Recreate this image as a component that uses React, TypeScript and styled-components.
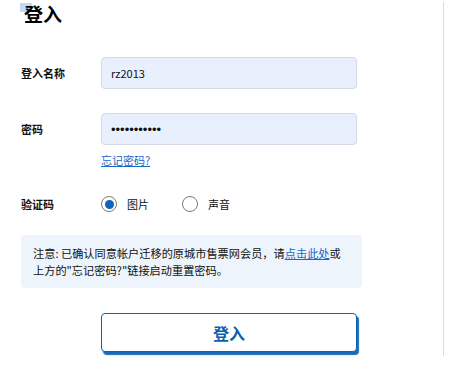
import React, { useState } from 'react';
import styled, { createGlobalStyle } from 'styled-components';

const GlobalStyle = createGlobalStyle`
  html, body {
    margin: 0;
    padding: 0;
    background: #ffffff;
  }
  body {
    font-family: "Noto Sans CJK SC", "Noto Sans", sans-serif;
    color: #111;
  }
`;

const Page = styled.div`
  width: 444px;
  height: 354px;
  margin-top: 2px;
  border-right: 1px solid #dcdcdc;
  box-sizing: border-box;
  padding-left: 21px;
  display: flex;
  flex-direction: column;
`;

const TitleWrap = styled.div`
  position: relative;
  height: 26px;
`;

const Marker = styled.span`
  position: absolute;
  left: -1px;
  top: 1px;
  width: 12px;
  height: 9px;
  background: #bfdcf7;
`;

const Title = styled.h1`
  position: relative;
  margin: 0 0 0 3px;
  font-size: 19px;
  line-height: 24px;
  font-weight: 700;
  color: #000;
`;

const Row = styled.div<{ $top: number }>`
  display: grid;
  grid-template-columns: 80px 256px;
  align-items: center;
  margin-top: ${(p) => p.$top}px;
`;

const Label = styled.label`
  font-size: 11px;
  font-weight: 700;
  color: #111;
`;

const Input = styled.input`
  box-sizing: border-box;
  width: 256px;
  height: 32px;
  padding: 0 9px;
  border: 1px solid #d3dae4;
  border-radius: 4px;
  background: #e8f0fe;
  font-family: "Noto Sans CJK SC", "Noto Sans", sans-serif;
  font-size: 11px;
  color: #111;
  outline: none;

  &[type='password'] {
    font-family: "Liberation Sans", sans-serif;
    font-size: 13px;
    letter-spacing: 0;
  }
`;

const ForgotLink = styled.a`
  margin: 8px 0 0 80px;
  width: max-content;
  font-size: 11px;
  line-height: 14px;
  color: #1767c6;
  text-decoration: underline;
`;

const Options = styled.div`
  display: flex;
  align-items: center;
  gap: 33px;
`;

const Option = styled.label`
  display: flex;
  align-items: center;
  gap: 10px;
  font-size: 11px;
  color: #111;
  cursor: pointer;
`;

const RadioRing = styled.span<{ $checked: boolean }>`
  box-sizing: border-box;
  width: 16px;
  height: 16px;
  border-radius: 50%;
  border: 1.5px solid #7a7a7a;
  display: flex;
  align-items: center;
  justify-content: center;
  background: #fff;

  &::after {
    content: '';
    width: 9px;
    height: 9px;
    border-radius: 50%;
    background: ${(p) => (p.$checked ? '#0f63b8' : 'transparent')};
  }
`;

const Notice = styled.div`
  box-sizing: border-box;
  width: 341px;
  height: 53px;
  margin-top: 23px;
  padding: 10px 12px;
  border-radius: 4px;
  background: #eef4fb;
  font-size: 11.2px;
  line-height: 17px;
  color: #111;
`;

const NoticeLink = styled.a`
  color: #1767c6;
  text-decoration: underline;
`;

const SubmitButton = styled.button`
  box-sizing: border-box;
  width: 256px;
  height: 39px;
  margin: 25px 0 0 80px;
  border: 1.5px solid #0b62b5;
  border-radius: 4px;
  background: #fff;
  box-shadow: 2px 3px 1px rgba(11, 98, 181, 0.95);
  font-family: "Noto Sans CJK SC", "Noto Sans", sans-serif;
  font-size: 16px;
  font-weight: 700;
  color: #0b5fb0;
  cursor: pointer;
`;

const App: React.FC = () => {
  const [captcha, setCaptcha] = useState<'image' | 'audio'>('image');

  return (
    <>
      <GlobalStyle />
      <Page>
        <TitleWrap>
          <Marker />
          <Title>登入</Title>
        </TitleWrap>

        <Row $top={29}>
          <Label>登入名称</Label>
          <Input type="text" defaultValue="rz2013" />
        </Row>

        <Row $top={24}>
          <Label>密码</Label>
          <Input type="password" defaultValue="12345678901" />
        </Row>

        <ForgotLink href="#">忘记密码?</ForgotLink>

        <Row $top={29}>
          <Label>验证码</Label>
          <Options>
            <Option onClick={() => setCaptcha('image')}>
              <RadioRing $checked={captcha === 'image'} />
              图片
            </Option>
            <Option onClick={() => setCaptcha('audio')}>
              <RadioRing $checked={captcha === 'audio'} />
              声音
            </Option>
          </Options>
        </Row>

        <Notice>
          注意: 已确认同意帐户迁移的原城市售票网会员，请<NoticeLink href="#">点击此处</NoticeLink>或
          <br />
          上方的"忘记密码?"链接启动重置密码。
        </Notice>

        <SubmitButton type="button">登入</SubmitButton>
      </Page>
    </>
  );
};

export default App;
